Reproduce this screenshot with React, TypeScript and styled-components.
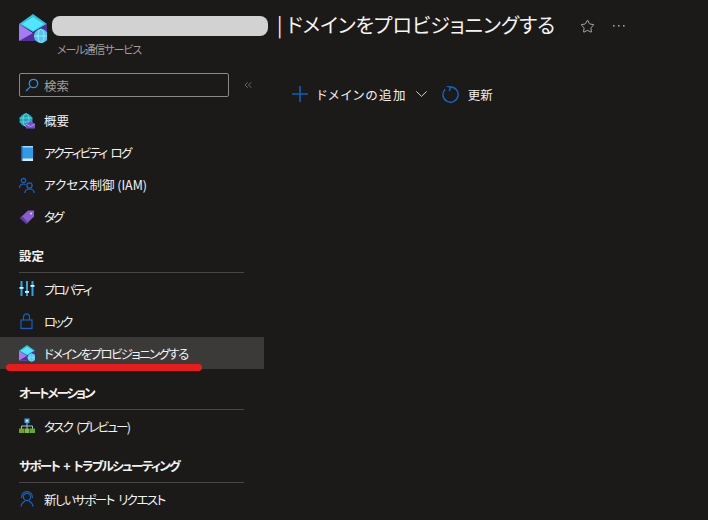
import React from 'react';
import styled, { createGlobalStyle } from 'styled-components';
import { ChevronsLeft, Star } from 'lucide-react';

const GlobalStyle = createGlobalStyle`
  html, body {
    margin: 0;
    padding: 0;
    background: #1b1a19;
  }
  body {
    font-family: "Noto Sans CJK JP", "Noto Sans", sans-serif;
    font-feature-settings: "palt";
    color: #f3f2f1;
  }
`;

const Page = styled.div`
  width: 708px;
  height: 520px;
  overflow: hidden;
  background: #1b1a19;
  display: flex;
  flex-direction: column;
`;

const Header = styled.header`
  height: 73px;
  box-sizing: border-box;
  padding: 14px 0 0 19px;
  display: flex;
  align-items: flex-start;
  gap: 5px;
`;

const HeaderText = styled.div`
  display: flex;
  flex-direction: column;
`;

const TitleRow = styled.div`
  display: flex;
  align-items: center;
  height: 24px;
`;

const Redacted = styled.span`
  width: 216px;
  height: 20px;
  border-radius: 8px;
  background: #d2d2d2;
  margin-right: 9px;
`;

const Title = styled.h1`
  margin: -2px 0 0;
  font-size: 20px;
  font-weight: 400;
  line-height: 24px;
  white-space: nowrap;
  color: #f5f5f5;
`;

const TitleActions = styled.div`
  display: flex;
  align-items: center;
  gap: 18px;
  margin-left: 25px;
  color: #c8c6c4;
`;

const Subtitle = styled.div`
  font-size: 11px;
  line-height: 16px;
  margin-top: 3px;
  margin-left: 5px;
  letter-spacing: -1.1px;
  color: #a19f9d;
`;

const Body = styled.div`
  flex: 1;
  display: flex;
  min-height: 0;
`;

const Sidebar = styled.nav`
  position: relative;
  width: 264px;
  flex: none;
`;

const SearchRow = styled.div`
  display: flex;
  align-items: center;
  padding-left: 19px;
  gap: 13px;
  height: 24px;
  margin-bottom: 8px;
  color: #a19f9d;
`;

const SearchBox = styled.div`
  width: 210px;
  height: 24px;
  box-sizing: border-box;
  border: 1px solid #8a8886;
  border-radius: 2px;
  display: flex;
  align-items: center;
  gap: 5px;
  padding-left: 5px;
  font-size: 12.5px;
  color: #a19f9d;
`;

const NavRow = styled.div<{ $active?: boolean; $track?: number }>`
  height: 32px;
  display: flex;
  align-items: center;
  gap: 9px;
  padding-left: 19px;
  font-size: 12.5px;
  white-space: pre;
  letter-spacing: ${({ $track }) => $track ?? 0}px;
  word-spacing: ${({ $track }) => ($track ? 3 : 0)}px;
  color: #f3f2f1;
  background: ${({ $active }) => ($active ? '#3b3a39' : 'transparent')};
`;

const RowText = styled.span<{ $shift?: number }>`
  margin-top: ${({ $shift }) => $shift ?? 0}px;
`;

const IconSlot = styled.span`
  width: 16px;
  height: 16px;
  display: flex;
  flex: none;
  svg {
    display: block;
  }
`;

const SectionHead = styled.div<{ $gap: number; $track?: number }>`
  margin: ${({ $gap }) => $gap}px 0 0 19px;
  width: 225px;
  height: 32px;
  box-sizing: border-box;
  border-bottom: 1px solid #484644;
  font-size: 12.5px;
  font-weight: 700;
  line-height: 29px;
  white-space: pre;
  letter-spacing: ${({ $track }) => $track ?? 0}px;
  word-spacing: ${({ $track }) => ($track ? 3 : 0)}px;
  color: #f3f2f1;
`;

const RedMark = styled.span`
  position: absolute;
  left: 6px;
  top: 291px;
  width: 196px;
  height: 7px;
  border-radius: 4px;
  background: #e81c1c;
`;

const Content = styled.main`
  flex: 1;
  padding: 10px 0 0 28px;
`;

const Toolbar = styled.div`
  display: flex;
  align-items: center;
  height: 24px;
  margin-top: -1px;
  font-size: 12.5px;
  color: #f3f2f1;
`;

const ToolButton = styled.div<{ $gap: number }>`
  display: flex;
  align-items: center;
  gap: ${({ $gap }) => $gap}px;
  margin-right: 15px;
  white-space: nowrap;
  svg {
    flex: none;
  }
`;

const ToolLabel = styled.span<{ $track?: number }>`
  letter-spacing: ${({ $track }) => $track ?? 0}px;
`;

const MailIcon = ({ size = 22 }: { size?: number }) => (
  <svg width={size} height={size * (29 / 28)} viewBox="0 0 28 29">
    <path d="M0 10 L14 0 L28 10 L14 18 Z" fill="#32bedd" />
    <path d="M3 10 L14 3 L25 10 L14 17 Z" fill="#50e6ff" />
    <path d="M0 10 L14 19 L14 27 L0 27 Z" fill="#a67af4" />
    <path d="M0 27 L14 19 L28 10 L28 27 Z" fill="#552f99" />
    <circle cx="22" cy="22" r="7" fill="#50c8ee" />
    <ellipse cx="22" cy="22" rx="3" ry="7" fill="none" stroke="#a8ecfb" strokeWidth="0.8" />
    <path d="M15 22 H29" stroke="#a8ecfb" strokeWidth="0.8" />
  </svg>
);

const GlobeMailIcon = () => (
  <svg width="16" height="16" viewBox="0 0 16 16">
    <circle cx="7" cy="7" r="6.5" fill="#1aa6b7" />
    <ellipse cx="7" cy="7" rx="3" ry="6.5" fill="none" stroke="#6fe0ea" strokeWidth="0.8" />
    <path d="M0.5 5 H13.5 M0.5 9 H13.5" stroke="#6fe0ea" strokeWidth="0.8" />
    <path d="M7 11 L11.5 8 L16 11 V15.5 H7 Z" fill="#7b4fc9" />
    <path d="M7 11 L11.5 13.5 L16 11" fill="none" stroke="#c3a6f5" strokeWidth="0.8" />
  </svg>
);

const LogIcon = () => (
  <svg width="16" height="16" viewBox="0 0 16 16">
    <rect x="2" y="1" width="12" height="15" rx="1" fill="#2f9be8" />
    <rect x="2" y="1" width="12" height="1.5" fill="#a8d8f8" />
    <rect x="2" y="13.5" width="12" height="2.5" fill="#d4ecfb" />
    <rect x="2" y="1" width="1.5" height="15" fill="#1565b5" />
  </svg>
);

const PeopleIcon = () => (
  <svg width="16" height="16" viewBox="0 0 16 16" fill="none" stroke="#1464c8" strokeWidth="1.2">
    <circle cx="4.5" cy="3.5" r="2.2" />
    <path d="M0.5 11 C0.5 7.5 3 7 4.5 7 C5.5 7 6 7.2 6.5 7.5" />
    <circle cx="10.5" cy="8.5" r="2.6" />
    <path d="M5.8 16 C6 13 8.2 12 10.5 12 C12.8 12 15 13 15.2 16" />
  </svg>
);

const TagIcon = () => (
  <svg width="16" height="16" viewBox="0 0 16 16">
    <path d="M1 9 L9 1.5 L15 1.5 L15 7.5 L7.5 15 Z" fill="#8a5cd0" />
    <path d="M1 9 L7.5 15 L9 13.5 L3 7.2 Z" fill="#5f3aa3" />
    <circle cx="12" cy="4.5" r="1.1" fill="#d9c6f7" />
  </svg>
);

const SlidersIcon = () => (
  <svg width="16" height="16" viewBox="0 0 16 16">
    <path d="M2.5 0 V15 M8 0 V15 M13.5 0 V15" stroke="#27a6e5" strokeWidth="2" />
    <rect x="0.5" y="6" width="4" height="1.8" fill="#e8f4fb" />
    <rect x="6" y="10" width="4" height="1.8" fill="#e8f4fb" />
    <rect x="11.5" y="4" width="4" height="1.8" fill="#e8f4fb" />
  </svg>
);

const LockIcon = () => (
  <svg width="16" height="16" viewBox="0 0 16 16" fill="none" stroke="#1360c4" strokeWidth="1.2">
    <rect x="2" y="7" width="11" height="8.4" />
    <path d="M4.5 7 V4.2 C4.5 2 6 0.8 7.5 0.8 C9 0.8 10.5 2 10.5 4.2 V7" />
  </svg>
);

const TaskIcon = () => (
  <svg width="16" height="16" viewBox="0 0 16 16">
    <path d="M8 4 V8 M2.5 11 V8 H13.5 V11 M8 8 V11" stroke="#a0c4e0" strokeWidth="1" fill="none" />
    <rect x="5.5" y="0.5" width="5" height="4.5" fill="#3ea6ea" />
    <rect x="7" y="2" width="2" height="1.5" fill="#dff1fc" />
    <rect x="0" y="10.5" width="5" height="4.5" fill="#6aa52e" />
    <rect x="5.5" y="10.5" width="5" height="4.5" fill="#7fbd35" />
    <rect x="11" y="10.5" width="5" height="4.5" fill="#6aa52e" />
  </svg>
);

const SupportIcon = () => (
  <svg width="16" height="16" viewBox="0 0 16 16" fill="none" stroke="#1464c8" strokeWidth="1.2">
    <circle cx="8" cy="6" r="3.6" />
    <path d="M2.6 7 C2.2 3 5 0.7 8 0.7 C11 0.7 13.8 3 13.4 7" />
    <path d="M2 15.5 C2.5 12 5 10.6 6 10 M14 15.5 C13.5 12 11 10.6 10 10" />
  </svg>
);

const SearchGlass = () => (
  <svg width="14" height="14" viewBox="0 0 14 14" fill="none" stroke="#2f8fe0" strokeWidth="1.3">
    <circle cx="8.5" cy="5.5" r="4.2" />
    <path d="M5.4 8.6 L1 13" />
  </svg>
);

const Dots = () => (
  <svg width="12" height="4" viewBox="0 0 12 4" fill="#a19f9d">
    <rect x="0" y="1" width="1.6" height="1.6" />
    <rect x="5" y="1" width="1.6" height="1.6" />
    <rect x="10" y="1" width="1.6" height="1.6" />
  </svg>
);

const PlusIcon = () => (
  <svg width="16" height="16" viewBox="0 0 16 16" stroke="#0f5fb8" strokeWidth="1.6">
    <path d="M8 0 V16 M0 8 H16" />
  </svg>
);

const CaretIcon = () => (
  <svg width="11" height="6" viewBox="0 0 11 6" fill="none" stroke="#d0cecc" strokeWidth="1">
    <path d="M0.4 0.4 L5.5 5.4 L10.6 0.4" />
  </svg>
);

const RefreshIcon = () => (
  <svg width="17" height="17" viewBox="0 0 17 17" fill="none" stroke="#0f66c8" strokeWidth="1.4">
    <path d="M3.2 3.2 A7.6 7.6 0 1 0 8.5 1" />
    <path d="M4.6 0 L8.6 1 L7.2 5" />
  </svg>
);

const App: React.FC = () => {
  return (
    <Page>
      <GlobalStyle />
      <Header>
        <MailIcon size={28} />
        <HeaderText>
          <TitleRow>
            <Redacted />
            <Title>| ドメインをプロビジョニングする</Title>
            <TitleActions>
              <Star size={15} strokeWidth={1.3} />
              <Dots />
            </TitleActions>
          </TitleRow>
          <Subtitle>メール通信サービス</Subtitle>
        </HeaderText>
      </Header>
      <Body>
        <Sidebar>
          <SearchRow>
            <SearchBox>
              <SearchGlass />
              検索
            </SearchBox>
            <ChevronsLeft size={12} strokeWidth={1.2} />
          </SearchRow>
          <NavRow><IconSlot><GlobeMailIcon /></IconSlot><RowText $shift={-1}>概要</RowText></NavRow>
          <NavRow $track={-1.7}><IconSlot><LogIcon /></IconSlot><RowText $shift={-1}>アクティビティ ログ</RowText></NavRow>
          <NavRow><IconSlot><PeopleIcon /></IconSlot><RowText $shift={-1}>アクセス制御 (IAM)</RowText></NavRow>
          <NavRow $track={-2}><IconSlot><TagIcon /></IconSlot><RowText $shift={-1}>タグ</RowText></NavRow>
          <SectionHead $gap={8}>設定</SectionHead>
          <NavRow $track={-1.8}><IconSlot><SlidersIcon /></IconSlot><RowText>プロパティ</RowText></NavRow>
          <NavRow $track={-2}><IconSlot><LockIcon /></IconSlot><RowText>ロック</RowText></NavRow>
          <NavRow $active $track={-1.6}><IconSlot><MailIcon size={16} /></IconSlot><RowText>ドメインをプロビジョニングする</RowText></NavRow>
          <SectionHead $gap={9} $track={-2}>オートメーション</SectionHead>
          <NavRow $track={-1.75}><IconSlot><TaskIcon /></IconSlot><RowText>タスク (プレビュー)</RowText></NavRow>
          <SectionHead $gap={9} $track={-1.65}>サポート + トラブルシューティング</SectionHead>
          <NavRow $track={-1.55}><IconSlot><SupportIcon /></IconSlot><RowText $shift={1}>新しいサポート リクエスト</RowText></NavRow>
          <RedMark />
        </Sidebar>
        <Content>
          <Toolbar>
            <ToolButton $gap={9}>
              <PlusIcon />
              <ToolLabel $track={1.4}>ドメインの追加</ToolLabel>
              <CaretIcon />
            </ToolButton>
            <ToolButton $gap={9}>
              <RefreshIcon />
              <ToolLabel>更新</ToolLabel>
            </ToolButton>
          </Toolbar>
        </Content>
      </Body>
    </Page>
  );
};

export default App;
